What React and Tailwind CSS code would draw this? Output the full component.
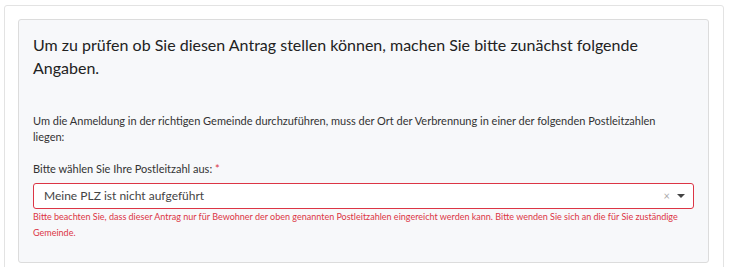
export default function App() {
  return (
    <div className="w-[729px] h-[267px] overflow-hidden bg-white pl-[4px] pt-[5px] font-['Lato',sans-serif]">
      <div className="w-[720px] h-[300px] border border-[#e3e3e3] rounded-[3px] bg-white pl-[13px] pt-[13px]">
        <div className="w-[691px] h-[244px] border border-[#dcdcdc] rounded-[3px] bg-[#f7f8fa] px-[14px] pt-[13px]">
          <h2 className="text-[16px] leading-[23px] text-[#222] pr-[40px]">
            Um zu prüfen ob Sie diesen Antrag stellen können, machen Sie bitte zunächst folgende Angaben.
          </h2>
          <p className="mt-[34px] text-[11px] leading-[16px] text-[#333] pr-[20px]">
            Um die Anmeldung in der richtigen Gemeinde durchzuführen, muss der Ort der Verbrennung in einer der folgenden Postleitzahlen liegen:
          </p>
          <label className="block mt-[16px] text-[11px] leading-[16px] text-[#333]">
            Bitte wählen Sie Ihre Postleitzahl aus: <span className="text-[#dc3545]">*</span>
          </label>
          <div className="mt-[6px] h-[26px] border border-[#dc3545] rounded-[3px] bg-white flex items-center pl-[10px] pr-[8px]">
            <span className="flex-1 text-[12px] text-[#444]">Meine PLZ ist nicht aufgeführt</span>
            <span className="text-[11px] text-[#aaa] mr-[7px]">×</span>
            <svg width="8" height="4" viewBox="0 0 8 4"><path d="M0 0h8L4 4z" fill="#444" /></svg>
          </div>
          <p className="mt-0 text-[9px] leading-[16px] text-[#dc3545]">
            Bitte beachten Sie, dass dieser Antrag nur für Bewohner der oben genannten Postleitzahlen eingereicht werden kann. Bitte wenden Sie sich an die für Sie zuständige Gemeinde.
          </p>
        </div>
      </div>
    </div>
  );
}
